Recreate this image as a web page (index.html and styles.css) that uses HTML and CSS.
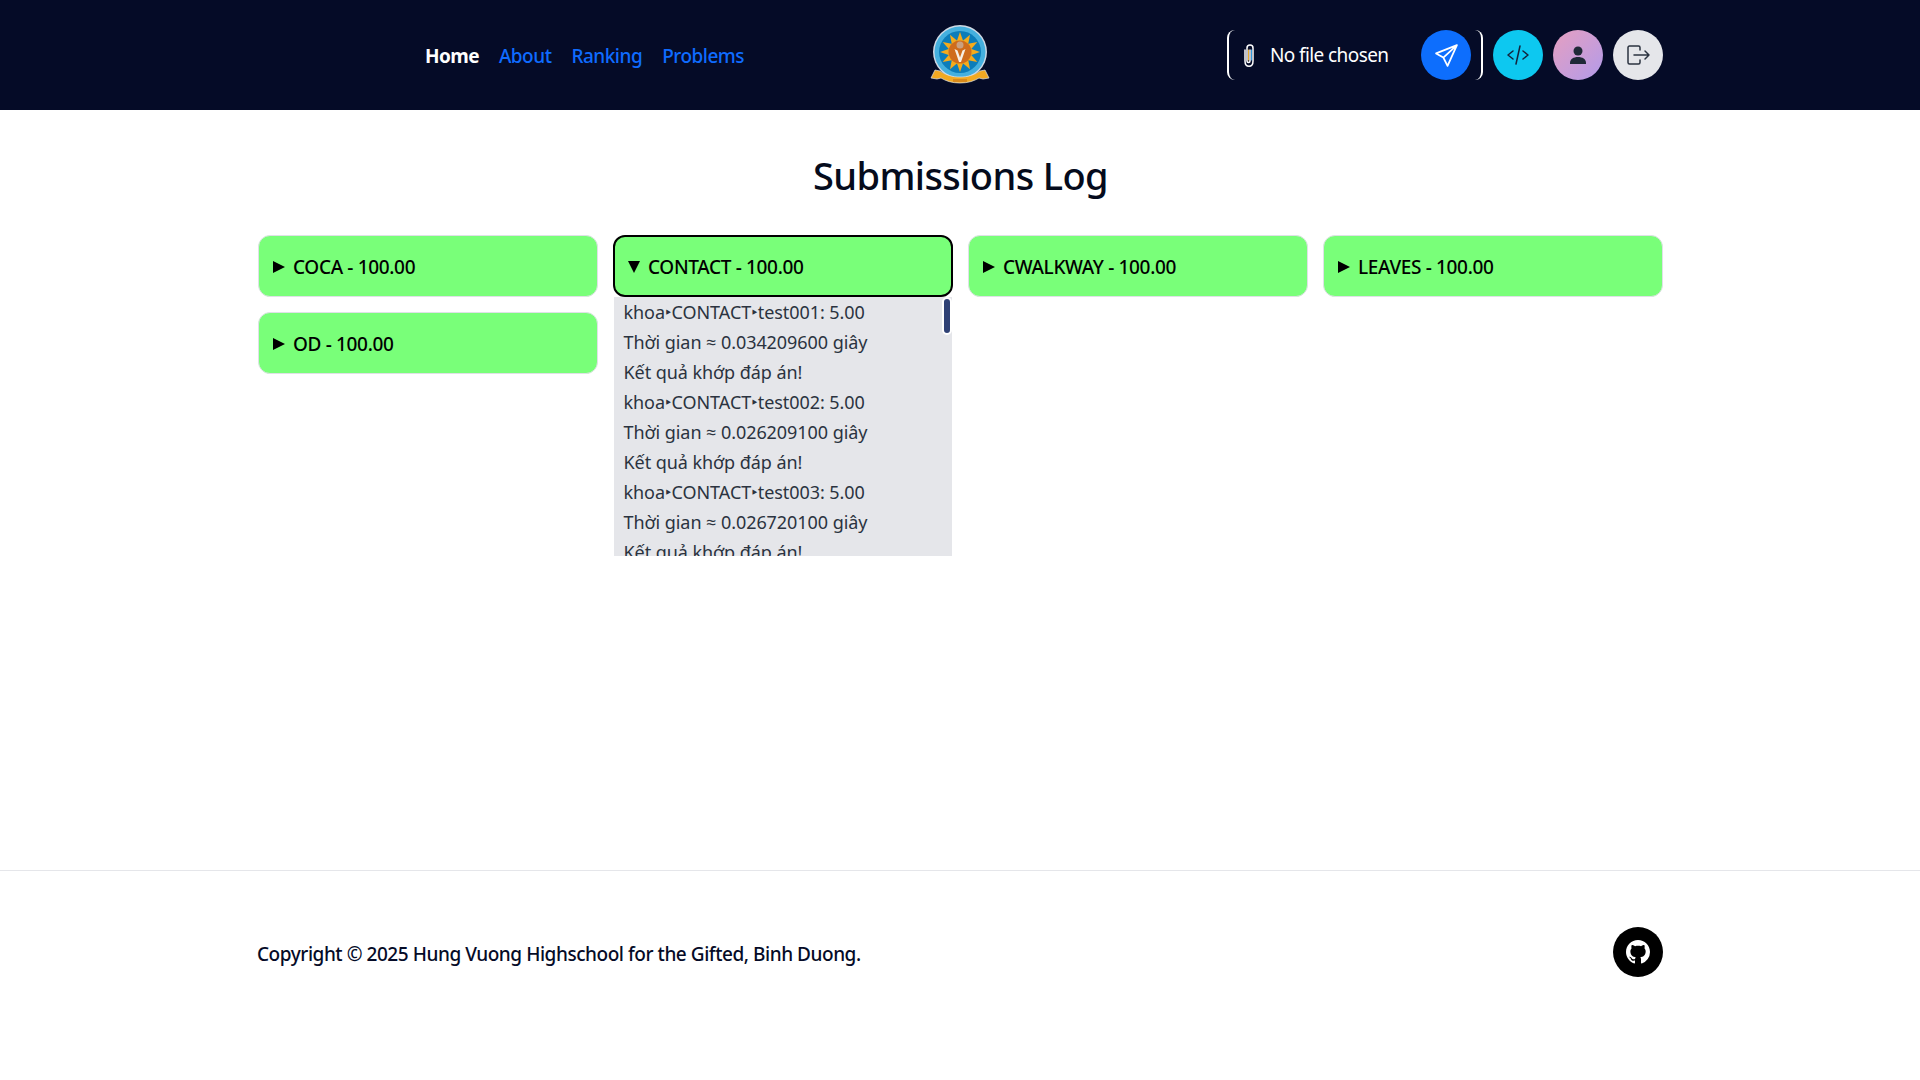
FILE: index.html
```html
<!DOCTYPE html>
<html lang="en">
<head>
  <meta charset="UTF-8"/>
  <meta name="viewport" content="width=device-width, initial-scale=1"/>
  <title>Submissions Log</title>
  <link rel="stylesheet" href="styles.css">
</head>
<body>
  <!-- Navbar -->
  <header class="navbar">
    <div class="nav-left">
      <nav class="nav-menu">
        <a class="nav-link active" href="#">Home</a>
        <a class="nav-link" href="#">About</a>
        <a class="nav-link" href="#">Ranking</a>
        <a class="nav-link" href="#">Problems</a>
      </nav>
    </div>
    <a class="logo" href="#">
      <svg viewBox="0 0 62 60" width="62" height="60">
        <ellipse cx="31" cy="27" rx="27" ry="27" fill="#cfd9e4"/>
        <ellipse cx="31" cy="27" rx="25.500" ry="25.500" fill="#45b0de"/>
        <ellipse cx="31" cy="27" rx="21" ry="21" fill="#0c7dba"/>
        <g fill="#f4ab1c">
          <path d="M31 7l3.500 10h-7z"/>
          <path d="M31 7l3.500 10h-7z" transform="rotate(30 31 27)"/>
          <path d="M31 7l3.500 10h-7z" transform="rotate(60 31 27)"/>
          <path d="M31 7l3.500 10h-7z" transform="rotate(90 31 27)"/>
          <path d="M31 7l3.500 10h-7z" transform="rotate(120 31 27)"/>
          <path d="M31 7l3.500 10h-7z" transform="rotate(150 31 27)"/>
          <path d="M31 7l3.500 10h-7z" transform="rotate(180 31 27)"/>
          <path d="M31 7l3.500 10h-7z" transform="rotate(210 31 27)"/>
          <path d="M31 7l3.500 10h-7z" transform="rotate(240 31 27)"/>
          <path d="M31 7l3.500 10h-7z" transform="rotate(270 31 27)"/>
          <path d="M31 7l3.500 10h-7z" transform="rotate(300 31 27)"/>
          <path d="M31 7l3.500 10h-7z" transform="rotate(330 31 27)"/>
        </g>
        <circle cx="31" cy="27" r="11.500" fill="#cf6c1c"/>
        <path d="M25.500 24l4.500 13h2l4.500-13-3 1.500-2.500 7-2.500-7z" fill="#f6efe4"/>
        <circle cx="31" cy="20" r="3.500" fill="#c9a080"/>
        <path d="M2 53l4-8 5 1c6 4 12 6 20 6s14-2 20-6l5-1 4 8-6 1-4-1c-5 3-11 5-19 5s-14-2-19-5l-4 1z" fill="#f2a922" stroke="#d9e2ea" stroke-width=".7"/>
        <path d="M24 54h14v3H24z" fill="#d98a1a"/>
      </svg>
    </a>
    <div class="nav-right">
      <form class="file-form">
        <svg class="clip" viewBox="0 0 12 25" width="12" height="25" fill="none" stroke-linecap="round">
          <path d="M2 7v11c0 7 8 7 8 0V5c0-4-6-4-6 0v13c0 2 3 2 3 0V7" stroke="#ffffff" stroke-width="1.500"/>
          <path d="M5.500 7v10" stroke="#e8a92c" stroke-width="1"/>
          <path d="M8.500 7v10" stroke="#2f9be0" stroke-width="1"/>
        </svg>
        <span class="file-name">No file chosen</span>
        <button class="circle-btn btn-send" type="button">
          <svg viewBox="0 0 24 24" width="25" height="25" fill="none" stroke="#fff" stroke-width="1.700" stroke-linejoin="round" stroke-linecap="round">
            <path d="M22 2L2 10l7 4 4 8zM22 2L9 14"/>
          </svg>
        </button>
      </form>
      <button class="circle-btn btn-code" type="button">
        <svg viewBox="0 0 24 24" width="24" height="24" fill="none" stroke="#14233c" stroke-width="1.500" stroke-linecap="round" stroke-linejoin="round">
          <path d="M7 8l-5 4 5 4M17 8l5 4-5 4M14 3l-4 18"/>
        </svg>
      </button>
      <button class="circle-btn btn-user" type="button">
        <svg viewBox="0 0 24 24" width="24" height="24" fill="#1f2937">
          <circle cx="12" cy="8" r="4.500"/>
          <path d="M4 20c0-4 3.500-6 8-6s8 2 8 6v1H4z"/>
        </svg>
      </button>
      <button class="circle-btn btn-logout" type="button">
        <svg viewBox="0 0 26 24" width="26" height="24" fill="none" stroke="#2b3340" stroke-width="1.500" stroke-linecap="round" stroke-linejoin="round">
          <path d="M15 7V4.500A1.500 1.500 0 0 0 13.500 3h-9A1.500 1.500 0 0 0 3 4.500v15A1.500 1.500 0 0 0 4.500 21h9a1.500 1.500 0 0 0 1.500-1.500V17M9 12h15M20 8l4 4-4 4"/>
        </svg>
      </button>
    </div>
  </header>

  <!-- Log -->
  <main class="content">
    <h1>Submissions Log</h1>
    <div class="log-grid">
      <details class="log-item"><summary>COCA - 100.00</summary></details>
      <details class="log-item" open>
        <summary>CONTACT - 100.00</summary>
        <div class="log-panel">
          <div>khoa‣CONTACT‣test001: 5.00</div>
          <div>Thời gian ≈ 0.034209600 giây</div>
          <div>Kết quả khớp đáp án!</div>
          <div>khoa‣CONTACT‣test002: 5.00</div>
          <div>Thời gian ≈ 0.026209100 giây</div>
          <div>Kết quả khớp đáp án!</div>
          <div>khoa‣CONTACT‣test003: 5.00</div>
          <div>Thời gian ≈ 0.026720100 giây</div>
          <div>Kết quả khớp đáp án!</div>
          <span class="log-thumb"></span>
        </div>
      </details>
      <details class="log-item"><summary>CWALKWAY - 100.00</summary></details>
      <details class="log-item"><summary>LEAVES - 100.00</summary></details>
      <details class="log-item"><summary>OD - 100.00</summary></details>
    </div>
  </main>

  <!-- Footer -->
  <footer class="footer">
    <p>Copyright © 2025 Hung Vuong Highschool for the Gifted, Binh Duong.</p>
    <a class="github" href="#">
      <svg viewBox="0 0 16 16" width="24" height="24" fill="#fff">
        <path d="M8 0C3.580 0 0 3.580 0 8c0 3.540 2.290 6.530 5.470 7.590.4.070.55-.17.55-.38 0-.19-.01-.82-.01-1.490-2.010.37-2.530-.49-2.690-.94-.09-.23-.48-.94-.82-1.130-.28-.15-.68-.52-.01-.53.630-.01 1.080.58 1.230.82.720 1.210 1.870.87 2.330.66.070-.52.280-.87.510-1.070-1.780-.2-3.640-.89-3.640-3.950 0-.87.310-1.590.820-2.150-.08-.2-.36-1.020.08-2.120 0 0 .67-.21 2.200.82.640-.18 1.320-.27 2-.27s1.360.09 2 .27c1.530-1.040 2.200-.82 2.200-.82.440 1.100.16 1.920.08 2.120.51.560.82 1.270.82 2.150 0 3.070-1.870 3.750-3.650 3.950.29.250.54.730.54 1.480 0 1.070-.01 1.930-.01 2.200 0 .21.150.46.550.38A8.010 8.010 0 0 0 16 8c0-4.420-3.580-8-8-8z"/>
      </svg>
    </a>
  </footer>
</body>
</html>
```

FILE: styles.css
```css
* {
  box-sizing: border-box;
}

body {
  margin: 0;
  font-family: "Noto Sans", "Open Sans", sans-serif;
  background: #ffffff;
  color: #000000;
}

/* navbar */
.navbar {
  height: 110px;
  background: #050b27;
  padding: 0 257px;
  display: flex;
  align-items: center;
}

.nav-left {
  flex: 1;
}

.nav-menu {
  display: flex;
  gap: 20px;
  margin: 1px 0 0 168px;
}

.nav-link {
  font-size: 19px;
  font-weight: 500;
  letter-spacing: -0.5px;
  color: #0f6bff;
  text-decoration: none;
}

.nav-link.active {
  color: #ffffff;
  font-weight: 700;
  letter-spacing: -0.6px;
}

.logo {
  display: flex;
  flex: none;
}

.nav-right {
  flex: 1;
  display: flex;
  align-items: center;
  justify-content: flex-end;
  gap: 10px;
}

.file-form {
  display: flex;
  align-items: center;
  height: 50px;
  width: 256px;
  padding: 0 10px 0 14px;
  border-left: 2px solid #ffffff;
  border-right: 2px solid #ffffff;
  border-radius: 8px;
}

.clip {
  flex: none;
}

.file-name {
  margin-left: 15px;
  flex: 1;
  font-size: 19px;
  letter-spacing: -0.6px;
  color: #ffffff;
}

.circle-btn {
  width: 50px;
  height: 50px;
  flex: none;
  padding: 0;
  border: none;
  border-radius: 50%;
  display: flex;
  align-items: center;
  justify-content: center;
}

.btn-send {
  background: #0d6efd;
}

.btn-code {
  background: #0dc8f0;
}

.btn-user {
  background: linear-gradient(135deg, #e69fc0, #b29bea);
}

.btn-logout {
  background: #e5e6ea;
}

/* log */
.content {
  height: 760px;
  padding: 0 257px 0 258px;
}

h1 {
  margin: 0;
  padding-top: 40px;
  height: 125px;
  text-align: center;
  font-size: 38px;
  font-weight: 500;
  line-height: 50px;
  letter-spacing: -0.6px;
  color: #050b1c;
}

.log-grid {
  display: grid;
  grid-template-columns: repeat(4, 340px);
  gap: 15px;
  align-items: start;
}

.log-item {
  position: relative;
}

summary {
  height: 62px;
  padding: 1px 14px 0;
  display: flex;
  align-items: center;
  background: #79ff79;
  border: 1px solid #dfe1e6;
  border-radius: 12px;
  font-size: 19px;
  font-weight: 500;
  letter-spacing: -0.34px;
  list-style: none;
  cursor: pointer;
}

summary::before {
  content: "";
  width: 0;
  height: 0;
  margin-right: 8px;
  border-top: 6px solid transparent;
  border-bottom: 6px solid transparent;
  border-left: 12px solid #000000;
}

.log-item[open] summary {
  padding: 1px 13px 0;
  border: 2px solid #000000;
}

.log-item[open] summary::before {
  border-top: 12px solid #000000;
  border-bottom: none;
  border-left: 6px solid transparent;
  border-right: 6px solid transparent;
}

.log-panel {
  position: absolute;
  top: 62px;
  left: 1px;
  right: 1px;
  height: 259px;
  z-index: 2;
  overflow: hidden;
  padding: 0 10px 0 9.5px;
  background: #e5e6ea;
  font-size: 18px;
  line-height: 30px;
  letter-spacing: -0.06px;
  color: #2b3340;
}

.log-thumb {
  position: absolute;
  top: 0;
  right: 0;
  width: 10px;
  height: 38px;
  background: #2f4175;
  border: 2px solid #ffffff;
  border-radius: 5px;
}

/* footer */
.footer {
  height: 162px;
  padding: 0 257px;
  border-top: 1px solid #e5e6ea;
  display: flex;
  align-items: center;
  justify-content: space-between;
}

.footer p {
  margin: 4px 0 0;
  font-size: 19px;
  font-weight: 500;
  letter-spacing: -0.45px;
  color: #050b27;
}

.github {
  width: 50px;
  height: 50px;
  border-radius: 50%;
  background: #000000;
  display: flex;
  align-items: center;
  justify-content: center;
}
```
